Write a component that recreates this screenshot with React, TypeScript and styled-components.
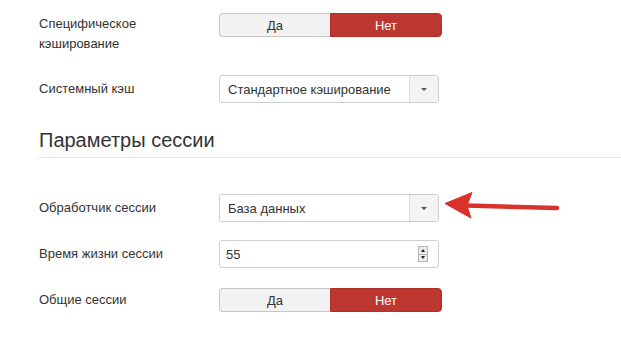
import React from "react";
import styled, { createGlobalStyle } from "styled-components";

const Global = createGlobalStyle`
  html, body { margin: 0; padding: 0; background: #fff; }
  body { font-family: "Liberation Sans", Arial, sans-serif; color: #333; font-size: 13px; }
`;

const Page = styled.div`
  position: relative;
  width: 621px;
  height: 359px;
  overflow: hidden;
  box-sizing: border-box;
  padding: 13px 0 0 39px;
`;

const Row = styled.div<{ $top?: boolean; $mb: number }>`
  display: flex;
  align-items: ${(p) => (p.$top ? "flex-start" : "center")};
  margin-bottom: ${(p) => p.$mb}px;
`;

const Label = styled.div<{ $pt?: number }>`
  width: 160px;
  margin-right: 20px;
  line-height: 20px;
  font-size: 13px;
  color: #333;
  padding-top: ${(p) => p.$pt ?? 0}px;
`;

const Toggle = styled.div`
  display: flex;
  width: 223px;
  height: 24px;
  box-sizing: border-box;
`;

const ToggleBtn = styled.div<{ $active?: boolean }>`
  flex: 1;
  display: flex;
  align-items: center;
  justify-content: center;
  font-size: 13px;
  box-sizing: border-box;
  ${(p) =>
    p.$active
      ? `background: #bd362f; color: #fff; border: 1px solid #b0302a; border-radius: 0 4px 4px 0;`
      : `background: #f2f2f2; color: #333; border: 1px solid #c6c6c6; border-right: none; border-radius: 4px 0 0 4px;`}
`;

const Select = styled.div`
  display: flex;
  width: 220px;
  height: 28px;
  box-sizing: border-box;
  border: 1px solid #cfcfcf;
  border-radius: 3px;
  background: #fff;
  overflow: hidden;
`;

const SelectText = styled.div`
  flex: 1;
  display: flex;
  align-items: center;
  padding-left: 8px;
  font-size: 13px;
  color: #333;
`;

const SelectArrow = styled.div`
  width: 28px;
  background: #f3f3f3;
  border-left: 1px solid #dcdcdc;
  display: flex;
  align-items: center;
  justify-content: center;
`;

const Caret = styled.span`
  width: 0;
  height: 0;
  border-left: 3px solid transparent;
  border-right: 3px solid transparent;
  border-top: 3px solid #555;
`;

const NumberInput = styled.div`
  display: flex;
  align-items: center;
  width: 220px;
  height: 28px;
  box-sizing: border-box;
  border: 1px solid #cfcfcf;
  border-radius: 3px;
  padding: 0 10px 0 6px;
`;

const NumberText = styled.div`
  flex: 1;
  font-size: 13px;
  color: #333;
`;

const Spinner = styled.div`
  width: 10px;
  height: 16px;
  box-sizing: border-box;
  border: 1px solid #b8b8b8;
  background: #ececec;
  display: flex;
  flex-direction: column;
`;

const SpinHalf = styled.div<{ $down?: boolean }>`
  flex: 1;
  display: flex;
  align-items: center;
  justify-content: center;
  ${(p) => (p.$down ? "border-top: 1px solid #b8b8b8;" : "")}
  &::after {
    content: "";
    width: 0;
    height: 0;
    border-left: 2.5px solid transparent;
    border-right: 2.5px solid transparent;
    ${(p) => (p.$down ? "border-top: 3px solid #222;" : "border-bottom: 3px solid #222;")}
  }
`;

const Heading = styled.h2`
  margin: 0 0 36px 0;
  font-weight: normal;
  font-size: 20px;
  line-height: 24px;
  color: #333;
  padding-bottom: 5px;
  border-bottom: 1px solid #e5e5e5;
`;

const Arrow = styled.svg`
  position: absolute;
  left: 440px;
  top: 188px;
`;

function YesNo() {
  return (
    <Toggle>
      <ToggleBtn>Да</ToggleBtn>
      <ToggleBtn $active>Нет</ToggleBtn>
    </Toggle>
  );
}

function DropDown({ value }: { value: string }) {
  return (
    <Select>
      <SelectText>{value}</SelectText>
      <SelectArrow>
        <Caret />
      </SelectArrow>
    </Select>
  );
}

export default function App() {
  return (
    <Page>
      <Global />
      <Row $top $mb={21}>
        <Label $pt={1}>Специфическое кэширование</Label>
        <YesNo />
      </Row>
      <Row $mb={25}>
        <Label>Системный кэш</Label>
        <DropDown value="Стандартное кэширование" />
      </Row>
      <Heading>Параметры сессии</Heading>
      <Row $mb={18}>
        <Label>Обработчик сессии</Label>
        <DropDown value="База данных" />
      </Row>
      <Row $mb={20}>
        <Label>Время жизни сессии</Label>
        <NumberInput>
          <NumberText>55</NumberText>
          <Spinner>
            <SpinHalf />
            <SpinHalf $down />
          </Spinner>
        </NumberInput>
      </Row>
      <Row $mb={0}>
        <Label>Общие сессии</Label>
        <YesNo />
      </Row>
      <Arrow width="122" height="36" viewBox="0 0 122 36">
        <line x1="26" y1="17.5" x2="117" y2="20" stroke="#d9312b" strokeWidth="4.5" strokeLinecap="round" />
        <path d="M5 15.5 L32 4.5 L27 17.5 L31 30 Z" fill="#d9312b" stroke="#d9312b" strokeWidth="1" strokeLinejoin="round" />
      </Arrow>
    </Page>
  );
}
